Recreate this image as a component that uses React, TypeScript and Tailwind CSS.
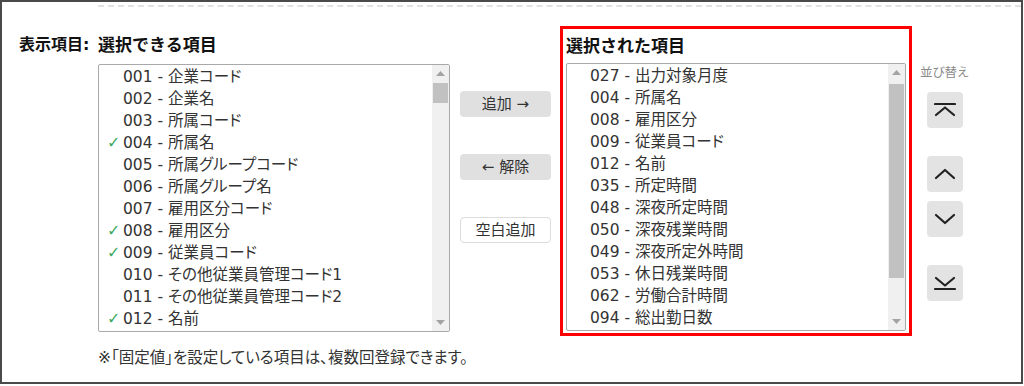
import React from "react";

type Item = { code: string; name: string; checked?: boolean };

const AVAILABLE: Item[] = [
  { code: "001", name: "企業コード" },
  { code: "002", name: "企業名" },
  { code: "003", name: "所属コード" },
  { code: "004", name: "所属名", checked: true },
  { code: "005", name: "所属グループコード" },
  { code: "006", name: "所属グループ名" },
  { code: "007", name: "雇用区分コード" },
  { code: "008", name: "雇用区分", checked: true },
  { code: "009", name: "従業員コード", checked: true },
  { code: "010", name: "その他従業員管理コード1" },
  { code: "011", name: "その他従業員管理コード2" },
  { code: "012", name: "名前", checked: true },
];

const SELECTED: Item[] = [
  { code: "027", name: "出力対象月度" },
  { code: "004", name: "所属名" },
  { code: "008", name: "雇用区分" },
  { code: "009", name: "従業員コード" },
  { code: "012", name: "名前" },
  { code: "035", name: "所定時間" },
  { code: "048", name: "深夜所定時間" },
  { code: "050", name: "深夜残業時間" },
  { code: "049", name: "深夜所定外時間" },
  { code: "053", name: "休日残業時間" },
  { code: "062", name: "労働合計時間" },
  { code: "094", name: "総出勤日数" },
];

function ScrollArrow({ down }: { down?: boolean }) {
  return (
    <svg width="9" height="5" viewBox="0 0 9 5" className="text-[#a3a3a3]">
      <path d={down ? "M0 0 L9 0 L4.5 5 Z" : "M0 5 L9 5 L4.5 0 Z"} fill="currentColor" />
    </svg>
  );
}

function ListBox({ items, width, thumbTop, thumbHeight, showChecks }: { items: Item[]; width: string; thumbTop: string; thumbHeight: string; showChecks?: boolean }) {
  return (
    <div className={`${width} h-[268px] border border-[#a9a9a9] rounded-[2px] bg-white flex overflow-hidden`}>
      <ul className={`flex-1 py-[1px] ${showChecks ? "pl-[8px]" : "pl-[23px]"}`}>
        {items.map((it) => (
          <li key={it.code + it.name} className="flex items-center h-[22px] text-[15.5px] leading-[22px] text-[#333] whitespace-nowrap">
            {showChecks && (
              <span className="w-[16px] text-[#3dab62] text-[16px] leading-none">{it.checked ? "✓" : ""}</span>
            )}
            <span>{it.code} - {it.name}</span>
          </li>
        ))}
      </ul>
      <div className="w-[17px] bg-[#f0f0f0] flex flex-col items-center">
        <div className="h-[17px] flex items-center justify-center">
          <ScrollArrow />
        </div>
        <div className={`w-[15px] ${thumbTop} ${thumbHeight} bg-[#c1c1c1]`} />
        <div className="mt-auto h-[17px] flex items-center justify-center">
          <ScrollArrow down />
        </div>
      </div>
    </div>
  );
}

function SortButton({ children, className }: { children: React.ReactNode; className?: string }) {
  return (
    <button className={`w-[36px] h-[36px] rounded-[4px] bg-[#e3e3e3] flex items-center justify-center ${className ?? ""}`}>
      <svg width="22" height="20" viewBox="0 0 22 20" fill="none" stroke="#222" strokeWidth="2.2" strokeLinecap="round" strokeLinejoin="round">
        {children}
      </svg>
    </button>
  );
}

export default function App() {
  return (
    <div className="w-[1024px] h-[386px] bg-white font-['DejaVu_Sans','Noto_Sans_CJK_JP',sans-serif] [font-feature-settings:'palt']">
      <div className="w-[1023px] h-[384px] border-2 border-[#4a4a4a] flex flex-col">
        {/* dashed divider */}
        <div className="ml-[96px] mt-[3px] border-t-2 border-dashed border-[#e2e2e2]" />

        <div className="mt-[19px] flex items-start">
          {/* available column */}
          <div className="pl-[17px] pt-[8px] w-[96px] text-[16px] leading-[22px] font-bold text-[#111]">表示項目:</div>
          <div className="pt-[8px] flex flex-col">
            <div className="text-[17px] leading-[22px] font-bold text-[#111] mb-[8px] [font-feature-settings:normal]">選択できる項目</div>
            <ListBox items={AVAILABLE} width="w-[352px]" thumbTop="mt-[1px]" thumbHeight="h-[20px]" showChecks />
          </div>

          {/* move buttons */}
          <div className="ml-[10px] mt-[65px] w-[91px] flex flex-col gap-[37px] text-[15px] text-[#333]">
            <button className="h-[26px] rounded-[4px] bg-[#e0e0e0]">追加 →</button>
            <button className="h-[26px] rounded-[4px] bg-[#e0e0e0]">← 解除</button>
            <button className="h-[26px] rounded-[4px] bg-white border border-[#dcdcdc]">空白追加</button>
          </div>

          {/* selected column */}
          <div className="ml-[9px] w-[352px] border-[3px] border-[#ff0000] px-[3px] pt-[6px] pb-[2px]">
            <div className="text-[17px] leading-[22px] font-bold text-[#111] mb-[6px] [font-feature-settings:normal]">選択された項目</div>
            <ListBox items={SELECTED} width="w-[340px]" thumbTop="mt-[3px]" thumbHeight="h-[194px]" />
          </div>

          {/* sort */}
          <div className="ml-[8px] mt-[39px] flex flex-col">
            <div className="text-[12.5px] leading-[16px] text-[#8a8a8a]">並び替え</div>
            <div className="pl-[7px] mt-[11px] flex flex-col">
              <SortButton>
                <path d="M1 4 H21" />
                <path d="M2 15 L11 7.5 L20 15" />
              </SortButton>
              <SortButton className="mt-[28px]">
                <path d="M2 14 L11 6 L20 14" />
              </SortButton>
              <SortButton className="mt-[9px]">
                <path d="M2 6 L11 14 L20 6" />
              </SortButton>
              <SortButton className="mt-[28px]">
                <path d="M2 5 L11 12.5 L20 5" />
                <path d="M1 16 H21" />
              </SortButton>
            </div>
          </div>
        </div>

        <div className="ml-[96px] mt-[12px] text-[15.5px] leading-[20px] text-[#333]">※「固定値」を設定している項目は、複数回登録できます。</div>
      </div>
    </div>
  );
}
